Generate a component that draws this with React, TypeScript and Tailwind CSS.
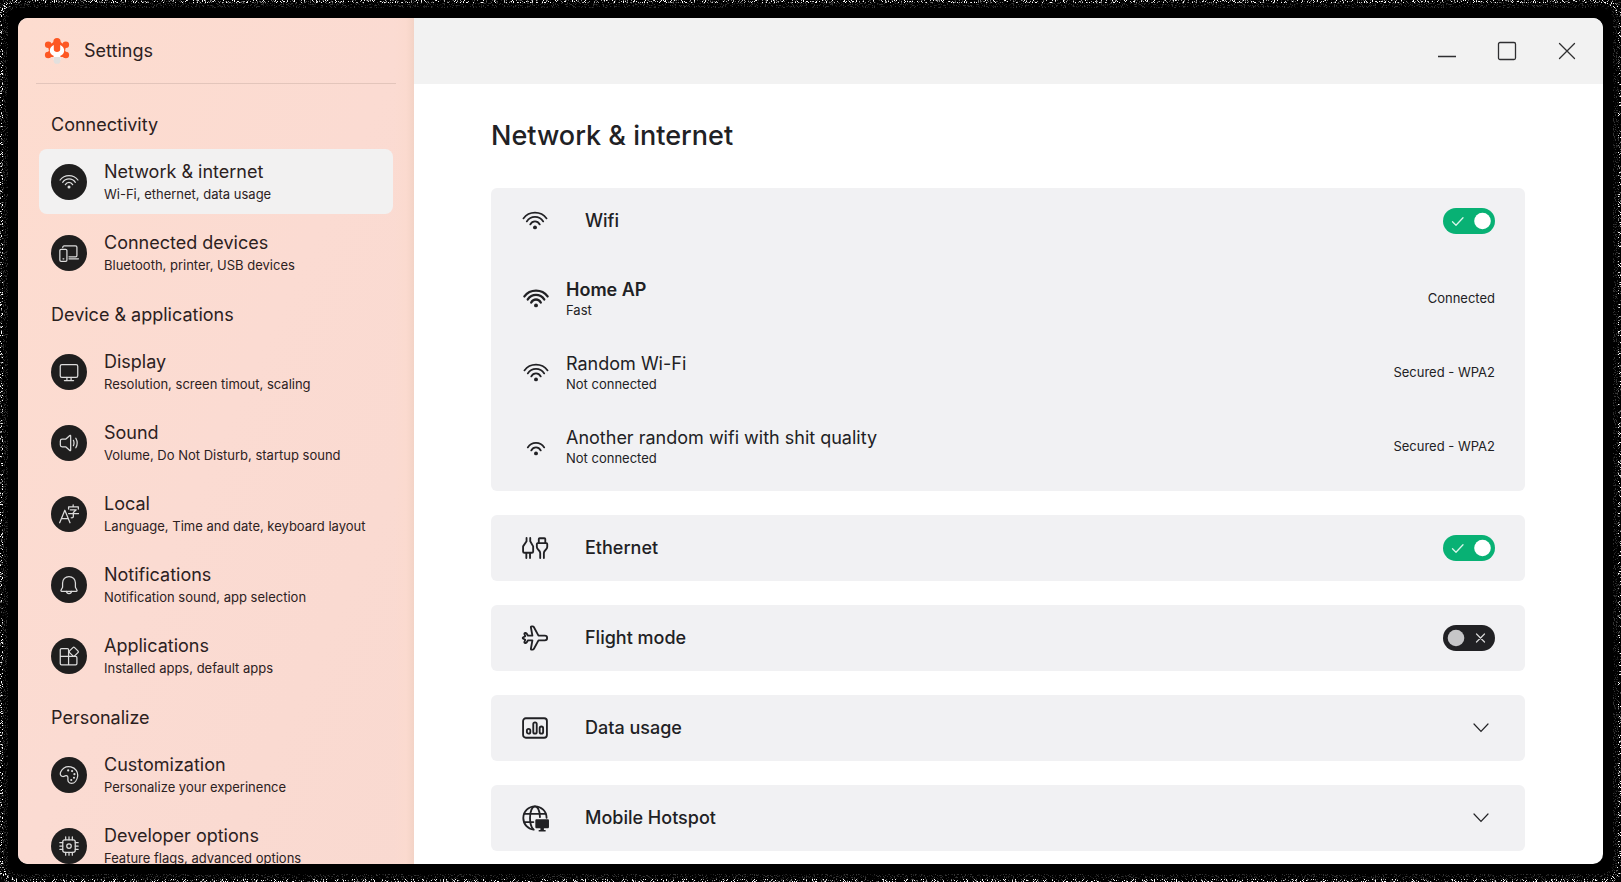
import { useState, type ReactNode } from 'react';

type IconProps = { className?: string };

function Icon({ children, className, w = 1.5 }: { children: ReactNode; className?: string; w?: number }) {
  return (
    <svg
      viewBox="0 0 24 24"
      fill="none"
      stroke="currentColor"
      strokeWidth={w}
      strokeLinecap="round"
      strokeLinejoin="round"
      aria-hidden="true"
      className={className}
    >
      {children}
    </svg>
  );
}

function WifiIcon({ className, w = 1.5, bars = 3 }: IconProps & { w?: number; bars?: number }) {
  return (
    <Icon className={className} w={w}>
      {bars > 2 && <path d="M1.3 9.6C3.8 6.2 7.7 4.3 12 4.3s8.2 1.9 10.7 5.3" />}
      <path d="M4.4 12.4C6.2 9.7 9 8.2 12 8.2s5.8 1.5 7.6 4.2" />
      <path d="M7.6 15.2c1-1.8 2.6-2.8 4.4-2.8s3.4 1 4.4 2.8" />
      <circle cx="12" cy="17.9" r="1.8" fill="currentColor" stroke="none" />
    </Icon>
  );
}

const DevicesIcon = ({ className }: IconProps) => (
  <Icon className={className}>
    <path d="M4.5 5.500V5.200c0-.9.7-1.700 1.700-1.700h13.600c1 0 1.700.8 1.700 1.700V15c0 .8-.6 1.500-1.500 1.500h-8" />
    <path d="M12 19h11.300" />
    <rect x="1" y="7.500" width="8.500" height="14.500" rx="1.500" />
    <path d="M4.800 19h1" />
  </Icon>
);

const DisplayIcon = ({ className }: IconProps) => (
  <Icon className={className}>
    <rect x="1.500" y="3" width="21" height="15.500" rx="2" />
    <path d="M9.500 18.500V22M14.500 18.500V22M6.500 22.200h11" />
  </Icon>
);

const SoundIcon = ({ className }: IconProps) => (
  <Icon className={className}>
    <path d="M14 3.500v17a.6.6 0 0 1-1 .5l-4.700-4.300H3.800A2.200 2.200 0 0 1 1.600 14.500v-5c0-1.200 1-2.200 2.200-2.200h4.500L13 3a.6.6 0 0 1 1 .5Z" />
    <path d="M17.300 8.800c.9 2 .9 4.400 0 6.400M20.200 6.300c2 3.500 2 7.900 0 11.400" />
  </Icon>
);

const LanguageIcon = ({ className }: IconProps) => (
  <Icon className={className}>
    <path d="M.8 22.500 7 7.500l6.200 15M3 17.500h8" />
    <path d="M17 1v2.200M11.500 6V3.400h11.700V6M13.500 7h7.200l-3.500 3.200V15c0 1.200-.8 1.700-2.500 1.500M11.500 11.500h12" />
  </Icon>
);

const BellIcon = ({ className }: IconProps) => (
  <Icon className={className}>
    <path d="M12 1.800c-4.600 0-7.700 3.500-7.700 7.800v5l-1.900 3.700c-.3.600.1 1.200.8 1.200h17.600c.7 0 1.100-.6.800-1.200l-1.900-3.700v-5c0-4.300-3.100-7.800-7.700-7.800Z" />
    <path d="M9 19.700c.2 1.600 1.400 2.600 3 2.600s2.800-1 3-2.600" />
  </Icon>
);

const AppsIcon = ({ className }: IconProps) => (
  <Icon className={className}>
    <path d="M11.500 12.500V4.500c0-.8-.6-1.500-1.500-1.500H3c-.9 0-1.500.7-1.500 1.500V21c0 .9.600 1.500 1.500 1.500h17c.9 0 1.500-.6 1.500-1.500v-7c0-.9-.6-1.500-1.500-1.500H1.500M11.500 12.500v10" />
    <path d="m16.700 1.900-4 4c-.6.600-.6 1.400 0 2l4 4c.6.600 1.400.6 2 0l4-4c.6-.6.6-1.400 0-2l-4-4c-.6-.6-1.400-.6-2 0Z" />
  </Icon>
);

const PaletteIcon = ({ className }: IconProps) => (
  <Icon className={className}>
    <path d="M2 8.500C4.500 3.500 9.500 1.300 14.300 2.300c5.400 1.200 8.900 6 8 11.500-.7 4.400-3.500 8.200-7.300 8.200-3.500 0-4.500-2.600-4.300-5 .2-2.600-.2-4.500-2.500-4.200-1.400.2-2.200 1.200-3.700 1C1.800 13.400 1 10.800 2 8.500Z" />
    <g fill="currentColor" stroke="none">
      <circle cx="11" cy="6.500" r="1.300" />
      <circle cx="15.700" cy="7.300" r="1.300" />
      <circle cx="18.500" cy="11" r="1.300" />
      <circle cx="18" cy="15.300" r="1.300" />
      <circle cx="14.700" cy="18" r="1.300" />
    </g>
  </Icon>
);

const ChipIcon = ({ className }: IconProps) => (
  <Icon className={className}>
    <rect x="4.500" y="4.500" width="15" height="15" rx="2.500" />
    <circle cx="12" cy="12" r="2.700" />
    <path d="M8 4.500V1M12 4.500V1M16 4.500V1M8 23v-3.500M12 23v-3.500M16 23v-3.500M4.500 8H1M4.500 12H1M4.500 16H1M23 8h-3.500M23 12h-3.500M23 16h-3.500" />
  </Icon>
);

const EthernetIcon = ({ className }: IconProps) => (
  <Icon className={className} w={1.700}>
    <path d="M4.200 2.800v3L1 10.500v4.700c0 .7.500 1.200 1.200 1.200h6.900c.7 0 1.200-.5 1.200-1.200v-4.700L7.600 5.800v-3M4 16.500v4.700M7.400 16.500v4.700" />
    <path d="M15.500 7.500V3.800c0-.5.400-.8.800-.8h4.400c.4 0 .8.300.8.800v3.700M14.400 7.500h8.200c.4 0 .7.300.7.700v2.800c0 2.600-3.100 3-3.100 5.500v4.700M14.400 7.500c-.4 0-.7.300-.7.700v2.800c0 2.600 3.100 3 3.100 5.500v4.700" />
  </Icon>
);

const PlaneIcon = ({ className }: IconProps) => (
  <Icon className={className} w={1.700}>
    <path d="M21 9.800h-5.800L10.900 1.900a1.400 1.400 0 0 0-1.200-.7H8.900c-.5 0-.8.400-.7.900l1.400 7.700H5.500L4.100 7.700c-.2-.2-.4-.3-.7-.3h-.5c-.5 0-.8.400-.7.900L3 10.300.9 11.600c-.3.200-.3.600 0 .8L3 13.700l-.8 2c-.1.500.2.900.7.900h.5c.3 0 .5-.1.700-.3l1.400-2.100h4.100l-1.400 7.700c-.1.500.2.900.7.900h.8c.5 0 1-.3 1.200-.7l4.300-7.900H21a2.200 2.200 0 0 0 0-4.400Z" />
  </Icon>
);

const DataIcon = ({ className }: IconProps) => (
  <Icon className={className} w={1.700}>
    <rect x="1" y="3" width="22" height="18" rx="2.500" />
    <rect x="4.500" y="12.800" width="3.200" height="4.400" rx="1.600" />
    <rect x="10.400" y="6.800" width="3.200" height="10.400" rx="1.600" />
    <rect x="16.300" y="10.600" width="3.200" height="6.600" rx="1.600" />
  </Icon>
);

const HotspotIcon = ({ className }: IconProps) => (
  <Icon className={className} w={1.700}>
    <path d="M22.700 11.800C22.700 5.700 17.900 1.200 12 1.200S1.200 6 1.200 12c0 5.700 4.100 10.300 9.600 10.700" />
    <path d="M10.300 22.300C8.600 20.500 7.400 16.500 7.400 12c0-6 2-10.800 4.600-10.800s4.400 4.300 4.600 10M2.300 8.200h19.400M2.300 15.800h8.200" />
    <path
      d="M13.500 13.200h10.200c.7 0 1.200.5 1.200 1.200v5.800c0 .7-.5 1.200-1.200 1.200H20.200v1.700h1.600v1.300h-6.400v-1.300h1.600v-1.700h-3.500c-.7 0-1.200-.5-1.200-1.200v-5.800c0-.7.5-1.200 1.200-1.200Z"
      fill="currentColor"
      stroke="none"
    />
  </Icon>
);

const ChevronIcon = () => (
  <svg viewBox="0 0 16 10" fill="none" stroke="currentColor" strokeLinecap="round" aria-hidden="true" className="h-[10px] w-4">
    <path d="m1 1 7 7.300L15 1" strokeWidth="1.200" />
  </svg>
);

function Logo() {
  return (
    <svg viewBox="0 0 26 28" aria-hidden="true" className="h-7 w-[26px]">
      <g fill="#fd5722">
        <circle cx="13" cy="12.500" r="8.300" />
        <circle cx="13" cy="4.500" r="3.600" />
        <circle cx="4.200" cy="7.700" r="3.300" />
        <circle cx="21.800" cy="7.700" r="3.300" />
        <circle cx="4.200" cy="18" r="3.300" />
        <circle cx="21.800" cy="18" r="3.300" />
        <path d="M4 10.800 7 8h12l3 2.800L20.500 13l1.500 2-3 5H7l-3-5 1.500-2Z" />
      </g>
      <path
        d="M9.800 8v4.400c0 1.600 1.400 2.500 3.200 2.500s3.200-.9 3.200-2.500V8c2.400 1 4 3 4 5.500 0 2.400-1.500 4.400-3.800 5.300v4.200H9.600v-4.200c-2.300-.9-3.800-2.900-3.800-5.300C5.800 11 7.400 9 9.800 8Z"
        fill="#fff"
      />
      <path d="M9.600 20h6.800v3.400a3.400 3.400 0 0 1-6.800 0Z" fill="#e2e0de" />
    </svg>
  );
}

type NavItem = { title: string; sub: string; icon: (p: IconProps) => ReactNode };

const groups: { name: string; items: NavItem[] }[] = [
  {
    name: 'Connectivity',
    items: [
      { title: 'Network & internet', sub: 'Wi-Fi, ethernet, data usage', icon: WifiIcon },
      { title: 'Connected devices', sub: 'Bluetooth, printer, USB devices', icon: DevicesIcon },
    ],
  },
  {
    name: 'Device & applications',
    items: [
      { title: 'Display', sub: 'Resolution, screen timout, scaling', icon: DisplayIcon },
      { title: 'Sound', sub: 'Volume, Do Not Disturb, startup sound', icon: SoundIcon },
      { title: 'Local', sub: 'Language, Time and date, keyboard layout', icon: LanguageIcon },
      { title: 'Notifications', sub: 'Notification sound, app selection', icon: BellIcon },
      { title: 'Applications', sub: 'Installed apps, default apps', icon: AppsIcon },
    ],
  },
  {
    name: 'Personalize',
    items: [
      { title: 'Customization', sub: 'Personalize your experinence', icon: PaletteIcon },
      { title: 'Developer options', sub: 'Feature flags, advanced options', icon: ChipIcon },
    ],
  },
];

function Sidebar() {
  return (
    <aside className="flex w-[396px] shrink-0 flex-col bg-[linear-gradient(to_left,#f3d3c6,#fbdacf_8px,transparent_20px),linear-gradient(115deg,#fddccf,#fbdbd2_50%,#f9d9d0)]">
      <div className="mx-[18px] flex h-[66px] shrink-0 items-center gap-3.5 border-b border-[#e3c5bb] pl-2">
        <Logo />
        <span className="text-lg text-[#2c211e]">Settings</span>
      </div>
      <nav aria-label="Settings" className="min-h-0 flex-1 overflow-hidden px-[21px] pt-[11px] text-[#2c211e]">
        {groups.map((group) => (
          <section key={group.name}>
            <h2 className="flex h-[54px] items-center px-3 pt-1.5 text-lg">{group.name}</h2>
            <ul className="flex flex-col gap-1.5">
              {group.items.map(({ title, sub, icon: ItemIcon }, i) => {
                const active = group.name === 'Connectivity' && i === 0;
                return (
                  <li key={title}>
                    <a
                      href="#"
                      aria-current={active ? 'page' : undefined}
                      className={`flex h-[65px] items-center gap-[17px] rounded-lg px-3 ${active ? 'bg-[#f2f1f1]' : ''}`}
                    >
                      <span className="flex size-9 shrink-0 items-center justify-center rounded-full bg-[#1f1e1e] text-[#dcdcdc]">
                        <ItemIcon className="size-5" />
                      </span>
                      <span className="whitespace-nowrap">
                        <span className="block text-lg leading-6">{title}</span>
                        <span className="block text-[13px] leading-5">{sub}</span>
                      </span>
                    </a>
                  </li>
                );
              })}
            </ul>
          </section>
        ))}
      </nav>
    </aside>
  );
}

function Toggle({ id, initial }: { id: string; initial: boolean }) {
  const [on, setOn] = useState(initial);
  return (
    <span className="relative flex h-[26px] w-[52px]">
      <input
        id={id}
        type="checkbox"
        role="switch"
        checked={on}
        onChange={(e) => setOn(e.target.checked)}
        className="h-full w-full cursor-pointer appearance-none rounded-full bg-[#212124] checked:bg-[#08b174]"
      />
      <svg viewBox="0 0 52 26" fill="none" strokeLinecap="round" strokeLinejoin="round" aria-hidden="true" className="pointer-events-none absolute inset-0">
        {on ? (
          <>
            <path d="m9.500 13.800 3.500 3.400 7-7.400" stroke="#d9f5ea" strokeWidth="1.300" />
            <circle cx="39.500" cy="13" r="8.300" fill="#fff" />
          </>
        ) : (
          <>
            <circle cx="13" cy="13" r="8.300" fill="#c6c6c8" />
            <path d="m33.500 9 8 8m0-8-8 8" stroke="#d8d8d8" strokeWidth="1.200" />
          </>
        )}
      </svg>
    </span>
  );
}

const networks = [
  { name: 'Home AP', state: 'Fast', info: 'Connected', strong: true, bars: 3 },
  { name: 'Random Wi-Fi', state: 'Not connected', info: 'Secured - WPA2', strong: false, bars: 3 },
  { name: 'Another random wifi with shit quality', state: 'Not connected', info: 'Secured - WPA2', strong: false, bars: 2 },
];

function SwitchRow({ id, label, icon, on }: { id: string; label: string; icon: ReactNode; on: boolean }) {
  return (
    <div className="flex h-[66px] items-center pl-[31px] pr-[30px]">
      {icon}
      <label htmlFor={id} className="ml-[37px] flex-1 text-lg font-medium">
        {label}
      </label>
      <Toggle id={id} initial={on} />
    </div>
  );
}

function ExpandRow({ label, icon }: { label: string; icon: ReactNode }) {
  return (
    <button type="button" aria-expanded={false} className="flex h-[66px] shrink-0 items-center rounded-md bg-[#f1f1f3] pl-[31px] pr-9 text-left">
      {icon}
      <span className="ml-[37px] flex-1 text-lg font-medium">{label}</span>
      <ChevronIcon />
    </button>
  );
}

const rowIcon = 'size-[26px] shrink-0 overflow-visible';

function Main() {
  return (
    <main className="flex min-h-0 flex-1 flex-col gap-6 overflow-hidden pl-[77px] pr-[78px] pt-8 text-[#212124]">
      <h1 className="mb-2 text-[27px] font-medium leading-10">Network & internet</h1>
      <section className="shrink-0 rounded-md bg-[#f1f1f3] pb-[7px]">
        <SwitchRow id="wifi" label="Wifi" on icon={<WifiIcon className={rowIcon} w={1.600} />} />
        <ul className="pt-2">
          {networks.map((n) => (
            <li key={n.name} className="flex h-[74px] items-center pl-8 pr-[30px]">
              <WifiIcon className={rowIcon} w={n.strong ? 2.2 : 1.6} bars={n.bars} />
              <span className="ml-[17px] flex-1">
                <span className={`block text-lg leading-[22px] ${n.strong ? 'font-semibold' : ''}`}>{n.name}</span>
                <span className="block text-[13px] leading-[18px]">{n.state}</span>
              </span>
              <span className="text-[13px]">{n.info}</span>
            </li>
          ))}
        </ul>
      </section>
      <section className="shrink-0 rounded-md bg-[#f1f1f3]">
        <SwitchRow id="ethernet" label="Ethernet" on icon={<EthernetIcon className={rowIcon} />} />
      </section>
      <section className="shrink-0 rounded-md bg-[#f1f1f3]">
        <SwitchRow id="flight" label="Flight mode" on={false} icon={<PlaneIcon className={rowIcon} />} />
      </section>
      <ExpandRow label="Data usage" icon={<DataIcon className={rowIcon} />} />
      <ExpandRow label="Mobile Hotspot" icon={<HotspotIcon className={rowIcon} />} />
    </main>
  );
}

function TitleBar() {
  const button = 'flex h-full w-[60px] items-center justify-center';
  return (
    <header className="flex h-[66px] shrink-0 justify-end bg-[#f2f2f2] pr-[6px] text-[#2f2f31]">
      <button type="button" aria-label="Minimize" className={button}>
        <svg viewBox="0 0 20 20" stroke="currentColor" strokeWidth="1.300" className="size-5">
          <path d="M1 15.500h18" />
        </svg>
      </button>
      <button type="button" aria-label="Maximize" className={button}>
        <svg viewBox="0 0 20 20" fill="none" stroke="currentColor" strokeWidth="1.300" className="size-5">
          <rect x="1.500" y="1.500" width="17" height="17" rx="1.500" />
        </svg>
      </button>
      <button type="button" aria-label="Close" className={button}>
        <svg viewBox="0 0 20 20" stroke="currentColor" strokeWidth="1.300" strokeLinecap="round" className="size-5">
          <path d="m2.500 2.500 15 15m0-15-15 15" />
        </svg>
      </button>
    </header>
  );
}

function GrainEdge() {
  return (
    <svg aria-hidden="true" className="pointer-events-none absolute inset-0 h-full w-full">
      <defs>
        <filter id="grain" x="0" y="0" width="100%" height="100%">
          <feTurbulence type="fractalNoise" baseFrequency="0.9" numOctaves="2" seed="4" />
          <feColorMatrix values="0 0 0 0 1  0 0 0 0 1  0 0 0 0 1  9 0 0 0 -5" />
          <feComposite in2="SourceGraphic" operator="in" />
        </filter>
      </defs>
      <g filter="url(#grain)" fill="none" stroke="#fff">
        <rect x="0" y="0" width="100%" height="100%" rx="20" strokeWidth="16" strokeOpacity="0.200" />
        <rect x="0" y="0" width="100%" height="100%" rx="20" strokeWidth="6" />
      </g>
    </svg>
  );
}

export default function App() {
  return (
    <div className="relative flex h-screen bg-black p-[18px] font-['Inter','Liberation_Sans',sans-serif]">
      <GrainEdge />
      <div className="flex min-w-0 flex-1 overflow-hidden rounded-[10px] bg-white">
        <Sidebar />
        <div className="flex min-w-0 flex-1 flex-col">
          <TitleBar />
          <Main />
        </div>
      </div>
    </div>
  );
}
